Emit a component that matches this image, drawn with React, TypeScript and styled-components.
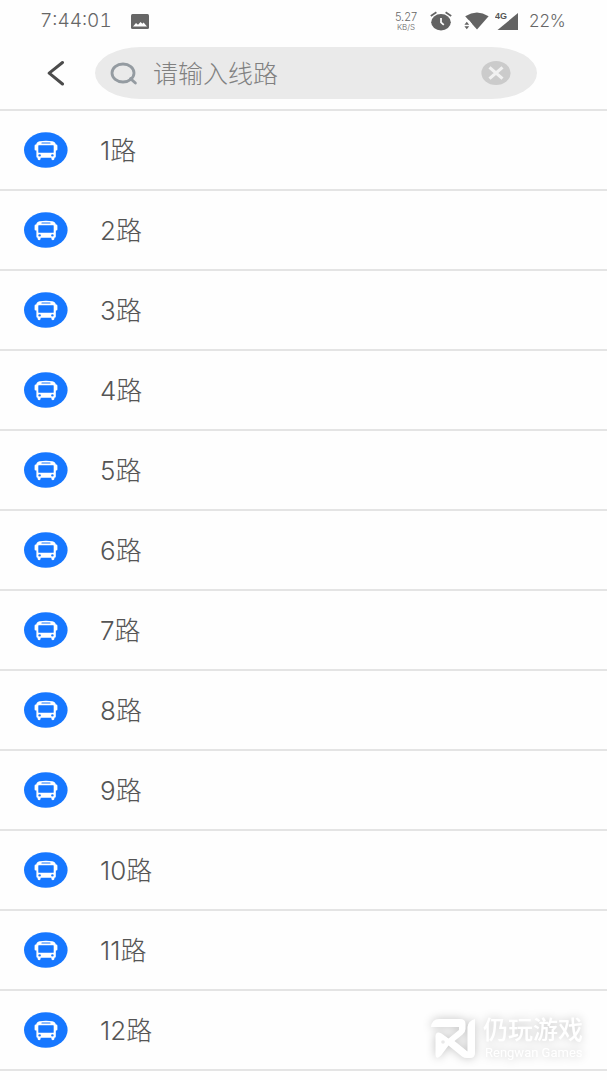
import React from "react";
import styled, { createGlobalStyle } from "styled-components";

const GlobalStyle = createGlobalStyle`
  *, *::before, *::after { box-sizing: border-box; }
  body {
    margin: 0;
    background: #fefefe;
    color: #5a5a5a;
    font-family: Inter, "Noto Sans CJK SC", sans-serif;
  }
`;

const Page = styled.div`
  position: relative;
  min-height: 100vh;
`;

const StatusBar = styled.div`
  display: flex;
  align-items: center;
  height: 42px;
  padding: 0 42px 0 40px;
  color: #666666;
  font-size: 17px;
  line-height: 20px;
  font-weight: 300;
`;

const Clock = styled.time`
  width: 91px;
  font-size: 19px;
  font-variant-numeric: tabular-nums;
`;

const StatusIcons = styled.div`
  display: flex;
  align-items: center;
  margin-left: auto;
`;

const Speed = styled.div`
  width: 24px;
  margin-right: 12px;
  text-align: center;
  font-size: 11px;
  line-height: 12px;
`;

const SpeedUnit = styled.div`
  font-size: 8px;
  line-height: 9px;
`;

const Signals = styled.div`
  display: flex;
  align-items: center;
  gap: 6px;
  margin-left: 12px;
`;

const Battery = styled.span`
  width: 36px;
  margin-left: 10px;
`;

const Header = styled.header`
  display: flex;
  align-items: center;
  height: 69px;
  padding: 0 70px 6px 40px;
  border-bottom: 2px solid #e4e4e4;
`;

const BackButton = styled.button`
  display: flex;
  flex: none;
  width: 55px;
  padding: 0 0 0 6px;
  border: 0;
  background: none;
  color: #4b4b4b;
`;

const SearchBox = styled.form`
  display: flex;
  flex: 1;
  align-items: center;
  min-width: 0;
  height: 52px;
  padding: 0 26px 0 15px;
  border-radius: 46px / 26px;
  background: #eaeaea;

  svg { flex: none; }
`;

const SearchInput = styled.input`
  flex: 1;
  width: 100%;
  min-width: 0;
  padding: 2px 0 0 15px;
  border: 0;
  outline: 0;
  background: none;
  color: #5a5a5a;
  font-family: inherit;
  font-size: 25px;
  font-weight: 300;
  line-height: 32px;

  &::placeholder { color: #808080; opacity: 1; }
`;

const ClearButton = styled.button`
  display: flex;
  flex: none;
  padding: 0;
  border: 0;
  background: none;
`;

const RouteList = styled.ul`
  margin: 0;
  padding: 0;
  list-style: none;
`;

const RouteItem = styled.li`
  height: 80px;
  border-bottom: 2px solid #e4e4e4;
`;

const RouteLink = styled.a`
  display: flex;
  align-items: center;
  height: 100%;
  padding: 0 24px;
  gap: 32px;
  color: #555555;
  font-size: 26px;
  font-weight: 300;
  line-height: 32px;
  text-decoration: none;
`;

const RouteName = styled.span`
  padding-top: 2px;
`;

const Watermark = styled.div`
  position: absolute;
  right: 24px;
  bottom: 19px;
  display: flex;
  align-items: center;
  gap: 8px;
  color: #ffffff;
  filter: drop-shadow(0 0 5px rgba(0, 0, 0, 0.24));
`;

const WatermarkName = styled.div`
  font-family: "Liberation Sans", "Noto Sans CJK SC", sans-serif;
  font-size: 25px;
  line-height: 29px;
  font-weight: 500;
`;

const WatermarkLatin = styled.div`
  padding-left: 2px;
  font-family: Roboto, "Liberation Sans", sans-serif;
  font-size: 13px;
  line-height: 16px;
  white-space: nowrap;
`;

const PictureIcon = () => (
  <svg width="18" height="15" viewBox="0 0 18 15" aria-hidden="true">
    <rect width="18" height="15" rx="1.5" fill="#666" />
    <path d="M2 12.6 5 9 7 10.8 9.6 8 11.4 9.8 12.6 8.6 16 12.6Z" fill="#fff" />
  </svg>
);

const AlarmIcon = () => (
  <svg width="22" height="20" viewBox="0 0 22 20" aria-hidden="true">
    <ellipse cx="11" cy="11.2" rx="9.8" ry="8.2" fill="#636363" />
    <path d="M.8 5 6.4 1.3M21.2 5 15.6 1.3" stroke="#636363" strokeWidth="1.8" fill="none" />
    <path d="M11 7V11.3L13.8 13.8" stroke="#fff" strokeWidth="1.7" fill="none" />
  </svg>
);

const WifiIcon = () => (
  <svg width="25" height="18" viewBox="0 0 25 18" aria-hidden="true">
    <path d="M1.2 4.2Q13 -3 24.6 4.2L13 17.5Z" fill="#636363" />
    <path d="M0 8.5H5.4L8 12V18H0Z" fill="#fefefe" />
    <path d="M.4 12.7 2.8 9.8 5.2 12.7ZM.4 14.3H5.2L2.8 17.2Z" fill="#636363" />
  </svg>
);

const SignalIcon = () => (
  <svg width="24" height="20" viewBox="0 0 24 20" aria-hidden="true">
    <path d="M2.5 19 23 2V19Z" fill="#636363" />
    <text
      x="0"
      y="8"
      fontSize="9"
      fontWeight="700"
      fontFamily="Liberation Sans, sans-serif"
      fill="#555"
      stroke="#fefefe"
      strokeWidth="2"
      paintOrder="stroke"
    >
      4G
    </text>
  </svg>
);

const BackIcon = () => (
  <svg width="20" height="26" viewBox="0 0 20 26" aria-hidden="true">
    <path
      d="M16.5 2.5 3.2 13.2 16.5 24"
      fill="none"
      stroke="currentColor"
      strokeWidth="3"
      strokeLinecap="round"
      strokeLinejoin="round"
    />
  </svg>
);

const SearchIcon = () => (
  <svg width="28" height="24" viewBox="0 0 28 24" aria-hidden="true">
    <ellipse cx="13" cy="12" rx="11" ry="9" fill="none" stroke="#949ba1" strokeWidth="2.8" />
    <path d="M20.5 17.6 25.4 22" stroke="#949ba1" strokeWidth="2.8" strokeLinecap="round" />
  </svg>
);

const ClearIcon = () => (
  <svg width="30" height="24" viewBox="0 0 30 24" aria-hidden="true">
    <ellipse cx="15" cy="12" rx="14.6" ry="12" fill="#cbcbcb" />
    <path d="M8.5 6.4 21.5 17.6M21.5 6.4 8.5 17.6" stroke="#f1f1f1" strokeWidth="3.2" />
  </svg>
);

const BusIcon = () => (
  <svg width="44" height="36" viewBox="0 0 44 36" aria-hidden="true">
    <ellipse cx="21.8" cy="18" rx="21.8" ry="17.8" fill="#1677ff" />
    <path
      d="M15.6 9.2Q22 8.2 28.4 9.2Q31.6 9.8 31.8 12.6H32.2Q33.4 12.6 33.4 13.8V17.4Q33.4 18.4 32.2 18.4H31.8V24.6Q31.8 25.8 30.4 25.8V26.8Q30.4 28.2 28.9 28.2Q27.4 28.2 27.4 26.8V25.8H16.6V26.8Q16.6 28.2 15.1 28.2Q13.6 28.2 13.6 26.8V25.8Q12.4 25.8 12.4 24.6V18.4H11.8Q10.6 18.4 10.6 17.4V13.8Q10.6 12.6 11.8 12.6H12.2Q12.4 9.8 15.6 9.2Z"
      fill="#fff"
    />
    <rect x="17.4" y="10.4" width="9.2" height="1.2" rx=".6" fill="#1677ff" />
    <rect x="14.3" y="13.2" width="15.4" height="7.6" rx=".6" fill="#1677ff" />
    <ellipse cx="15.6" cy="23.4" rx="1.3" ry="1.1" fill="#1677ff" />
    <ellipse cx="28.4" cy="23.4" rx="1.3" ry="1.1" fill="#1677ff" />
  </svg>
);

const WatermarkLogo = () => (
  <svg width="44" height="40" viewBox="0 0 44 40" aria-hidden="true">
    <path
      d="M0 8Q1 0 8 0H29Q34.5 0 34.5 5V10Q34.5 13 31.5 15.4L23.5 22 36.5 32.5V8Q37 2 44 0V34Q44 39 39 39H36Q33 39 31 37.4L17.5 26.5 10 36.5Q4.5 41.5 4.5 35V17Q5 11.5 10.5 14.5L17.5 19.5 28 11V8Z"
      fill="currentColor"
    />
    <circle cx="12" cy="23" r="1.8" fill="#e8e8e8" />
  </svg>
);

const routes = Array.from({ length: 12 }, (_, index) => `${index + 1}路`);

export default function App() {
  return (
    <>
      <GlobalStyle />
      <Page>
        <StatusBar>
          <Clock>7:44:01</Clock>
          <PictureIcon />
          <StatusIcons>
            <Speed>
              5.27
              <SpeedUnit>KB/S</SpeedUnit>
            </Speed>
            <AlarmIcon />
            <Signals>
              <WifiIcon />
              <SignalIcon />
            </Signals>
            <Battery>22%</Battery>
          </StatusIcons>
        </StatusBar>
        <Header>
          <BackButton type="button" aria-label="返回">
            <BackIcon />
          </BackButton>
          <SearchBox role="search" onSubmit={(event) => event.preventDefault()}>
            <SearchIcon />
            <SearchInput type="text" aria-label="线路" placeholder="请输入线路" />
            <ClearButton type="reset" aria-label="清除">
              <ClearIcon />
            </ClearButton>
          </SearchBox>
        </Header>
        <main>
          <RouteList>
            {routes.map((route) => (
              <RouteItem key={route}>
                <RouteLink href="#">
                  <BusIcon />
                  <RouteName>{route}</RouteName>
                </RouteLink>
              </RouteItem>
            ))}
          </RouteList>
        </main>
        <Watermark>
          <WatermarkLogo />
          <div>
            <WatermarkName>仍玩游戏</WatermarkName>
            <WatermarkLatin>Rengwan Games</WatermarkLatin>
          </div>
        </Watermark>
      </Page>
    </>
  );
}
